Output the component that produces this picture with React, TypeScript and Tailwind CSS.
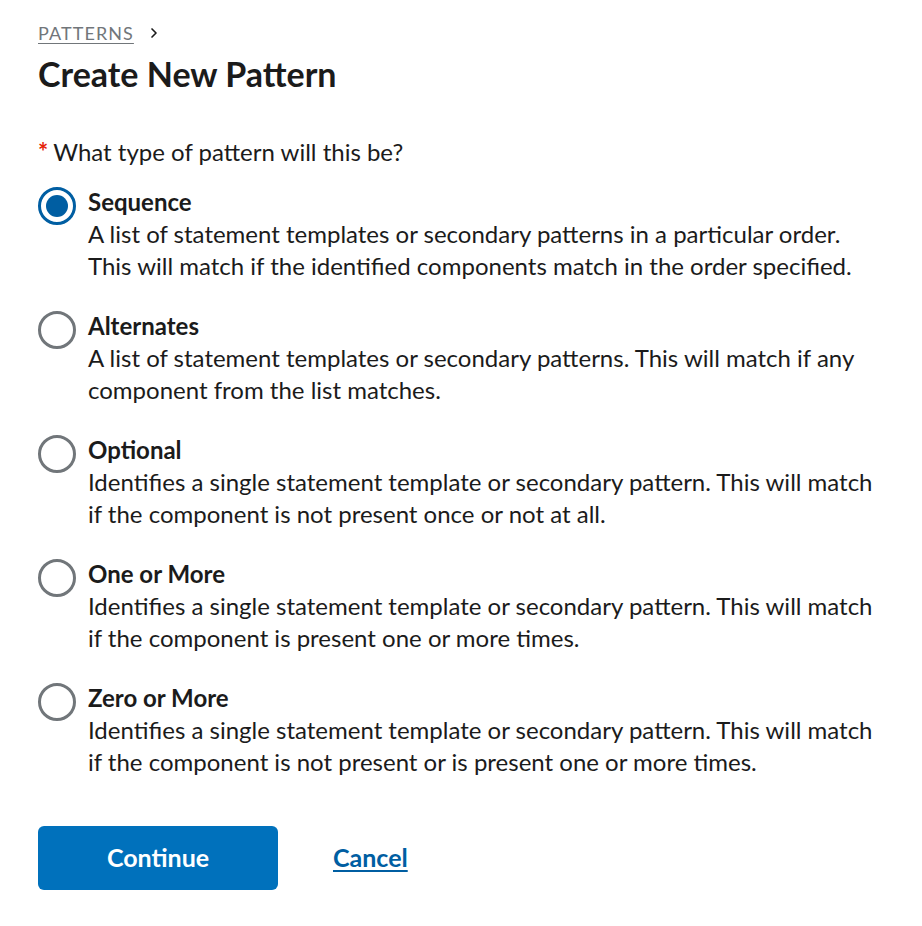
import React, { useState } from "react";
import { ChevronRight } from "lucide-react";

const options = [
  {
    id: "sequence",
    label: "Sequence",
    lines: [
      "A list of statement templates or secondary patterns in a particular order.",
      "This will match if the identified components match in the order specified.",
    ],
  },
  {
    id: "alternates",
    label: "Alternates",
    lines: [
      "A list of statement templates or secondary patterns. This will match if any",
      "component from the list matches.",
    ],
  },
  {
    id: "optional",
    label: "Optional",
    lines: [
      "Identifies a single statement template or secondary pattern. This will match",
      "if the component is not present once or not at all.",
    ],
  },
  {
    id: "one-or-more",
    label: "One or More",
    lines: [
      "Identifies a single statement template or secondary pattern. This will match",
      "if the component is present one or more times.",
    ],
  },
  {
    id: "zero-or-more",
    label: "Zero or More",
    lines: [
      "Identifies a single statement template or secondary pattern. This will match",
      "if the component is not present or is present one or more times.",
    ],
  },
];

export default function App() {
  const [selected, setSelected] = useState("sequence");

  return (
    <div className="min-h-screen bg-white pl-[38px] pt-[20px] text-[#1b1b1b] font-['Lato',sans-serif]">
      {/* breadcrumb */}
      <nav className="flex h-[26px] items-center gap-3 text-[18px] leading-[26px] tracking-[0.06em] text-[#71767a]">
        <a href="#" className="underline underline-offset-[3px]">PATTERNS</a>
        <ChevronRight size={16} strokeWidth={2.5} className="text-[#1b1b1b]" />
      </nav>

      <h1 className="mt-[8px] text-[34px] font-bold leading-[40px]">Create New Pattern</h1>

      <fieldset className="mt-[42px]">
        <legend className="text-[24px] leading-[32px]">
          <span className="text-[#e52207] font-bold mr-[5px]">*</span>
          What type of pattern will this be?
        </legend>

        <div className="mt-[18px] flex flex-col gap-[28px]">
          {options.map((o) => {
            const checked = selected === o.id;
            return (
              <label key={o.id} className="flex gap-[12px] cursor-pointer" onClick={() => setSelected(o.id)}>
                <span
                  className={`mt-[1px] flex h-[38px] w-[38px] shrink-0 items-center justify-center rounded-full border-[3px] ${
                    checked ? "border-[#005ea2]" : "border-[#71767a]"
                  }`}
                >
                  {checked && <span className="h-[22px] w-[22px] rounded-full bg-[#005ea2]" />}
                </span>
                <span className="text-[24px] leading-[32px]">
                  <span className="block font-bold">{o.label}</span>
                  {o.lines.map((l) => (
                    <span key={l} className="block">{l}</span>
                  ))}
                </span>
              </label>
            );
          })}
        </div>
      </fieldset>

      <div className="mt-[48px] flex items-center gap-[55px]">
        <button className="h-[64px] w-[240px] rounded-[6px] bg-[#0071bc] text-[25px] font-bold text-white">
          Continue
        </button>
        <a href="#" className="text-[25px] font-bold text-[#005ea2] underline underline-offset-[3px]">
          Cancel
        </a>
      </div>
    </div>
  );
}
